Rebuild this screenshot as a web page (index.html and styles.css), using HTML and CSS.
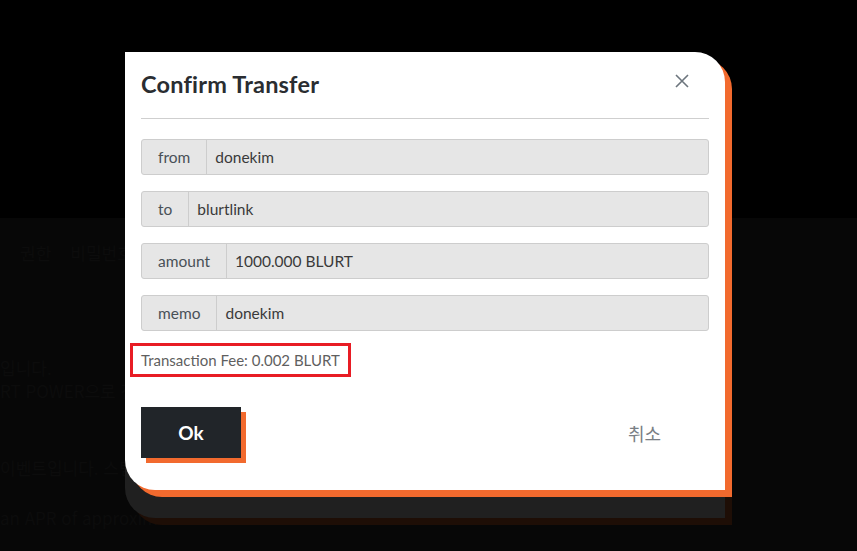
FILE: index.html
```html
<!DOCTYPE html>
<html lang="ko">
<head>
<meta charset="utf-8">
<title>Confirm Transfer</title>
<link rel="stylesheet" href="styles.css">
</head>
<body>
<div class="page">
  <div class="page-top"></div>
  <div class="page-body">
    <p class="faint l1">권한 &nbsp;&nbsp; 비밀번호</p>
    <p class="faint l2">입니다.</p>
    <p class="faint l3">RT POWER으로 전환</p>
    <p class="faint l4">이벤트입니다. 스팀 파워</p>
    <p class="faint l5">an APR of approximate</p>
  </div>
</div>

<div class="modal">
  <div class="modal-header">
    <h2 class="modal-title">Confirm Transfer</h2>
    <button class="close" aria-label="close">
      <svg width="14" height="14" viewBox="0 0 14 14"><path d="M1 1L13 13M13 1L1 13" stroke="#6c757d" stroke-width="1.6" fill="none"/></svg>
    </button>
  </div>
  <div class="modal-body">
    <div class="group"><span class="label">from</span><span class="value">donekim</span></div>
    <div class="group"><span class="label">to</span><span class="value">blurtlink</span></div>
    <div class="group"><span class="label">amount</span><span class="value">1000.000 BLURT</span></div>
    <div class="group"><span class="label">memo</span><span class="value">donekim</span></div>
    <div class="fee"><span class="fee-box">Transaction Fee: 0.002 BLURT</span></div>
    <div class="actions">
      <button class="ok">Ok</button>
      <button class="cancel">취소</button>
    </div>
  </div>
</div>
</body>
</html>
```
FILE: styles.css
```css
* { box-sizing: border-box; }
html, body { margin: 0; padding: 0; }
body {
  background: #060606;
  font-family: Lato, "Noto Sans CJK KR", sans-serif;
  width: 857px;
  height: 551px;
  overflow: hidden;
  position: relative;
}
.page { display: flex; flex-direction: column; height: 551px; }
.page-top { height: 218px; background: #000; flex: none; }
.page-body { flex: 1; background: #070707; position: relative; }
.faint {
  margin: 0;
  position: absolute;
  color: #0c0c0c;
  font-size: 17px;
  font-family: "Noto Sans CJK KR", sans-serif;
}
.l1 { left: 20px; top: 22px; }
.l2 { left: 0; top: 137px; }
.l3 { left: 0; top: 160px; }
.l4 { left: 0; top: 237px; }
.l5 { left: 0; top: 287px; }

.modal {
  position: absolute;
  left: 125px;
  top: 52px;
  width: 600px;
  height: 438px;
  background: #fff;
  border-radius: 0 30px 0 30px;
  box-shadow: 7px 7px 0 #f26a2e, 0 28px 0 #202020, 7px 35px 0 #1e0e06;
  padding: 0 16px;
}
.modal-header {
  display: flex;
  align-items: center;
  justify-content: space-between;
  padding: 16px 0 17px;
  border-bottom: 1px solid #cfcfcf;
}
.modal-title {
  margin: 0;
  font-size: 23.5px;
  line-height: 33px;
  font-weight: 700;
  color: #2a2d31;
  letter-spacing: 0.2px;
}
.close {
  background: none;
  border: 0;
  padding: 0;
  width: 14px;
  height: 14px;
  margin-right: 20px;
  margin-top: -8px;
  display: flex;
}
.modal-body {
  padding-top: 20px;
  display: flex;
  flex-direction: column;
}
.group {
  display: flex;
  height: 36px;
  background: #e6e6e6;
  border: 1px solid #cdcdcd;
  border-radius: 3px;
  margin-bottom: 16px;
  font-size: 15.5px;
}
.group .label {
  display: flex;
  align-items: center;
  padding: 0 16px;
  color: #495057;
  border-right: 1px solid #cdcdcd;
}
.group .value {
  display: flex;
  align-items: center;
  padding-left: 8px;
  color: #3a3a3a;
}
.fee { margin-top: -4px; margin-left: -11px; display: flex; }
.fee-box {
  border: 3px solid #e81c24;
  height: 34px;
  padding: 0 8px;
  display: flex;
  align-items: center;
  color: #5f5f5f;
  font-size: 15px;
}
.actions {
  display: flex;
  justify-content: space-between;
  align-items: center;
  margin-top: 30px;
}
.ok {
  width: 100px;
  height: 51px;
  background: #212529;
  color: #fff;
  border: 0;
  font-family: Lato, sans-serif;
  font-weight: 700;
  font-size: 19px;
  box-shadow: 5px 5px 0 #f26a2e;
  padding: 0;
}
.cancel {
  background: none;
  border: 0;
  color: #7a7f85;
  font-family: "Noto Sans CJK KR", sans-serif;
  font-size: 18px;
  margin-right: 48px;
  padding: 0;
}
```
